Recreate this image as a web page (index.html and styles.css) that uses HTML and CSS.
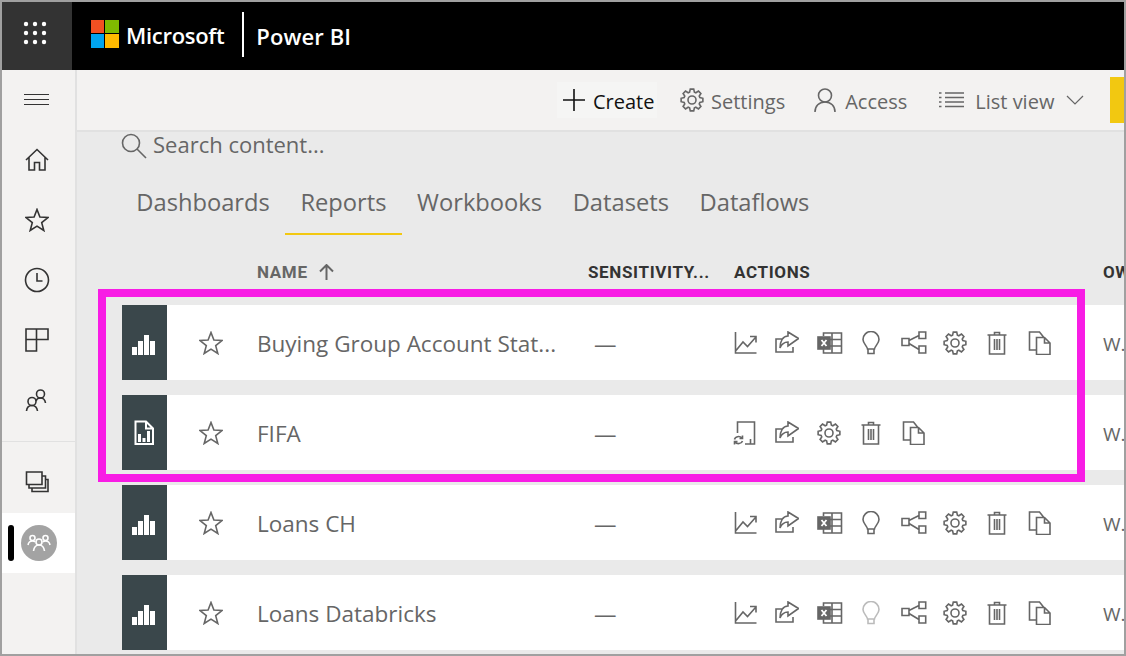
FILE: index.html
```html
<!DOCTYPE html>
<html>
<head>
	<meta charset="utf8">
	<title>Power BI</title>
	<link rel="stylesheet" href="styles.css">
</head>
<body>
	<!-- icones usados na tabela e na barra lateral -->
	<svg class="sprite" xmlns="http://www.w3.org/2000/svg">
		<symbol id="i-star" viewBox="0 0 24 24"><path d="M12 1.500l2.900 7.600 8.100.4-6.300 5.100 2.100 7.900L12 18.100l-6.800 4.400 2.100-7.900L1 9.500l8.100-.4z"/></symbol>
		<symbol id="i-trend" viewBox="0 0 24 24"><path d="M2.500 1v21h21M3 19.500L10 11l4.500 4.500 8-9M17 5.500h6v6"/></symbol>
		<symbol id="i-share" viewBox="0 0 24 24"><path d="M7 8H1v13h17v-5M13 1l10.500 6.500L13 15v-4c-3 0-6 1-8 6 0-7 3-12 8-12z"/></symbol>
		<symbol id="i-excel" viewBox="0 0 26 24"><path d="M6.500 5V2h18v20h-18v-4M13 8.500h11.500M13 15h11.500M15 2v20"/><rect class="solid" x="1" y="6" width="12" height="12"/><path class="cut" d="M4.500 9l5 6M9.500 9l-5 6"/></symbol>
		<symbol id="i-bulb" viewBox="0 0 24 24"><path d="M8.500 18c-.3-3-4.500-5.500-4.500-9.500a8 8 0 0 1 16 0c0 4-4.200 6.500-4.500 9.500zM9 18v4.500h6V18"/></symbol>
		<symbol id="i-nodes" viewBox="0 0 26 24"><path d="M1 7.500h7v7H1zM18 1h6.700v6.500H18zM18 15h6.700v7H18zM8 9.500l10-5M8 12.500l10 6"/></symbol>
		<symbol id="i-gear" viewBox="0 0 24 24"><path d="M9.600 4.160L10.280 1.130H13.720L14.400 4.160L15.850 4.760L18.470 3.100L20.900 5.530L19.240 8.150L19.840 9.600L22.870 10.280V13.720L19.840 14.400L19.240 15.850L20.900 18.470L18.470 20.900L15.850 19.240L14.400 19.840L13.720 22.870H10.280L9.600 19.840L8.150 19.240L5.530 20.900L3.100 18.470L4.760 15.850L4.160 14.400L1.130 13.720V10.280L4.160 9.600L4.760 8.150L3.100 5.530L5.530 3.100L8.150 4.760z"/><circle cx="12" cy="12" r="4"/></symbol>
		<symbol id="i-trash" viewBox="0 0 24 24"><path d="M2.500 4h19M9.500 4V1.500h5V4M4.500 4v19h15V4M9.500 8v11M12 8v11M14.500 8v11"/></symbol>
		<symbol id="i-copy" viewBox="0 0 24 24"><path d="M9.500 19H2.500V1h10l4 5M9.500 6.500h8l5.500 5.500v11.500H9.500zM17.500 6.500V12H23"/></symbol>
		<symbol id="i-refresh" viewBox="0 0 24 24"><path d="M4.500 12V1h17v22H12M17.500 23v-5M1.500 18.500c.5-3 5-4 7.500-1.500M9.500 20c-1 3-5.500 3.500-7.500 1M9.500 14.500v3H6.500M1.500 23.500v-3h3"/></symbol>
		<symbol id="i-bars" viewBox="0 0 25 25"><path class="fill" d="M0 17h5v8H0zM6 11h5v14H6zM12 5h5v20h-5zM18 11h5v14h-5z"/></symbol>
	</svg>

	<div class="topo">
		<div class="waffle">
			<svg width="26" height="26" viewBox="0 0 26 26"><g class="dots"><circle cx="4" cy="4" r="2.200"/><circle cx="13" cy="4" r="2.200"/><circle cx="22" cy="4" r="2.200"/><circle cx="4" cy="13" r="2.200"/><circle cx="13" cy="13" r="2.200"/><circle cx="22" cy="13" r="2.200"/><circle cx="4" cy="22" r="2.200"/><circle cx="13" cy="22" r="2.200"/><circle cx="22" cy="22" r="2.200"/></g></svg>
		</div>
		<svg class="ms-logo" width="28" height="28" viewBox="0 0 28 28">
			<rect width="13" height="13" fill="#f25022"/>
			<rect x="14" width="14" height="13" fill="#7fba00"/>
			<rect y="14" width="13" height="14" fill="#00a4ef"/>
			<rect x="14" y="14" width="14" height="14" fill="#ffb900"/>
		</svg>
		<span class="ms-nome">Microsoft</span>
		<span class="ms-divisor"></span>
		<span class="produto">Power BI</span>
	</div>

	<div class="corpo">
		<nav class="lateral">
			<div class="nav-item">
				<svg class="hamb" width="26" height="12" viewBox="0 0 26 12"><path d="M0 .5h25M0 5.500h25M0 10.500h25"/></svg>
			</div>
			<div class="nav-item">
				<svg width="24" height="24" viewBox="0 0 24 24"><path d="M1 12L12 1.500 23 12M4 9.500V22h5.500v-7.500h5V22H20V9.500"/></svg>
			</div>
			<div class="nav-item">
				<svg width="24" height="24"><use href="#i-star"/></svg>
			</div>
			<div class="nav-item">
				<svg width="26" height="26" viewBox="0 0 26 26"><circle cx="13" cy="13" r="11.500"/><path d="M13 6v8h5.500"/></svg>
			</div>
			<div class="nav-item">
				<svg width="24" height="24" viewBox="0 0 24 24"><path d="M1 1h10.500v10.500H1zM11.500 1H23v10.500H11.500zM1 11.500h10.500V23H1z"/></svg>
			</div>
			<div class="nav-item">
				<svg width="24" height="24" viewBox="0 0 24 24"><circle cx="15.500" cy="6" r="4"/><path d="M11 13c.5-2 2.500-3 4.500-3s4.500 1.500 5 5"/><circle cx="7" cy="13.500" r="4"/><path d="M1.500 23c.3-3.500 2.500-5.500 5.500-5.500s5 2 5.500 5.500"/></svg>
			</div>
			<div class="nav-sep"></div>
			<div class="nav-item nav-pilha">
				<svg width="26" height="24" viewBox="0 0 26 24"><path d="M2.500 2h15.500v12.500H2.500zM5 14.500v3.500h16.500v-12H18M8 18v3.500h16V9.500h-2.500"/></svg>
			</div>
			<div class="nav-ativo">
				<span class="pilula"></span>
				<span class="avatar">
					<svg width="24" height="24" viewBox="0 0 24 24"><circle cx="5.500" cy="7" r="2.500"/><circle cx="18.500" cy="7" r="2.500"/><circle cx="12" cy="11" r="3"/><path d="M1 14c.5-3 2-4 4.500-4 1 0 2 .3 2.500 1M23 14c-.5-3-2-4-4.500-4-1 0-2 .3-2.500 1M6.500 20c.5-3.500 2.500-6 5.500-6s5 2.500 5.500 6"/></svg>
				</span>
			</div>
		</nav>

		<main class="conteudo">
			<div class="ferramentas">
				<div class="tool criar">
					<svg width="24" height="24" viewBox="0 0 24 24"><path d="M12 1v22M1 12h22"/></svg>
					<span>Create</span>
				</div>
				<div class="tool t-settings">
					<svg width="24" height="24"><use href="#i-gear"/></svg>
					<span>Settings</span>
				</div>
				<div class="tool t-access">
					<svg width="22" height="24" viewBox="0 0 22 24"><circle cx="11" cy="7.500" r="6.500"/><path d="M1 24c0-6 4-10 10-10s10 4 10 10"/></svg>
					<span>Access</span>
				</div>
				<div class="tool t-lista">
					<svg width="25" height="18" viewBox="0 0 25 18"><path d="M6 2h19M6 6.500h19M6 11h19M6 15.500h19M0 2h2.500M0 6.500h2.500M0 11h2.500M0 15.500h2.500"/></svg>
					<span>List view</span>
					<svg class="seta" width="18" height="10" viewBox="0 0 18 10"><path d="M1 1l8 8 8-8"/></svg>
				</div>
				<span class="amarelo"></span>
			</div>

			<div class="busca">
				<svg width="26" height="26" viewBox="0 0 26 26"><circle cx="10" cy="10" r="8.500"/><path d="M16 16l9 9"/></svg>
				<span>Search content...</span>
			</div>

			<div class="abas">
				<span class="aba">Dashboards</span>
				<span class="aba ativa">Reports</span>
				<span class="aba">Workbooks</span>
				<span class="aba">Datasets</span>
				<span class="aba">Dataflows</span>
			</div>

			<div class="cabecalho">
				<span class="col-nome">NAME <svg width="15" height="16" viewBox="0 0 15 16"><path d="M7.500 16V1M1 7.500L7.500 1 14 7.500"/></svg></span>
				<span>SENSITIVITY...</span>
				<span>ACTIONS</span>
				<span>OW</span>
			</div>

			<div class="linha">
				<span class="tile"><svg width="25" height="25"><use href="#i-bars"/></svg></span>
				<span class="estrela"><svg width="24" height="24"><use href="#i-star"/></svg></span>
				<span class="nome">Buying Group Account Stat...</span>
				<span class="sens">—</span>
				<span class="acoes">
					<svg width="24" height="24"><use href="#i-trend"/></svg>
					<svg width="24" height="24"><use href="#i-share"/></svg>
					<svg width="26" height="24"><use href="#i-excel"/></svg>
					<svg width="24" height="24"><use href="#i-bulb"/></svg>
					<svg width="26" height="24"><use href="#i-nodes"/></svg>
					<svg width="24" height="24"><use href="#i-gear"/></svg>
					<svg width="24" height="24"><use href="#i-trash"/></svg>
					<svg width="24" height="24"><use href="#i-copy"/></svg>
				</span>
				<span class="dono">W.</span>
			</div>

			<div class="linha">
				<span class="tile">
					<svg width="25" height="25" viewBox="0 0 25 25"><path class="traco-branco" d="M3.500 1.500H14l7 7V24H3.500zM14 1.500v7h7"/><path class="fill" d="M6 14h3v8H6zM10.500 18h3v4h-3zM15 11h3v11h-3z"/></svg>
				</span>
				<span class="estrela"><svg width="24" height="24"><use href="#i-star"/></svg></span>
				<span class="nome">FIFA</span>
				<span class="sens">—</span>
				<span class="acoes">
					<svg width="24" height="24"><use href="#i-refresh"/></svg>
					<svg width="24" height="24"><use href="#i-share"/></svg>
					<svg width="24" height="24"><use href="#i-gear"/></svg>
					<svg width="24" height="24"><use href="#i-trash"/></svg>
					<svg width="24" height="24"><use href="#i-copy"/></svg>
				</span>
				<span class="dono">W.</span>
			</div>

			<div class="linha">
				<span class="tile"><svg width="25" height="25"><use href="#i-bars"/></svg></span>
				<span class="estrela"><svg width="24" height="24"><use href="#i-star"/></svg></span>
				<span class="nome">Loans CH</span>
				<span class="sens">—</span>
				<span class="acoes">
					<svg width="24" height="24"><use href="#i-trend"/></svg>
					<svg width="24" height="24"><use href="#i-share"/></svg>
					<svg width="26" height="24"><use href="#i-excel"/></svg>
					<svg width="24" height="24"><use href="#i-bulb"/></svg>
					<svg width="26" height="24"><use href="#i-nodes"/></svg>
					<svg width="24" height="24"><use href="#i-gear"/></svg>
					<svg width="24" height="24"><use href="#i-trash"/></svg>
					<svg width="24" height="24"><use href="#i-copy"/></svg>
				</span>
				<span class="dono">W.</span>
			</div>

			<div class="linha">
				<span class="tile"><svg width="25" height="25"><use href="#i-bars"/></svg></span>
				<span class="estrela"><svg width="24" height="24"><use href="#i-star"/></svg></span>
				<span class="nome">Loans Databricks</span>
				<span class="sens">—</span>
				<span class="acoes">
					<svg width="24" height="24"><use href="#i-trend"/></svg>
					<svg width="24" height="24"><use href="#i-share"/></svg>
					<svg width="26" height="24"><use href="#i-excel"/></svg>
					<svg class="apagado" width="24" height="24"><use href="#i-bulb"/></svg>
					<svg width="26" height="24"><use href="#i-nodes"/></svg>
					<svg width="24" height="24"><use href="#i-gear"/></svg>
					<svg width="24" height="24"><use href="#i-trash"/></svg>
					<svg width="24" height="24"><use href="#i-copy"/></svg>
				</span>
				<span class="dono">W.</span>
			</div>
		</main>
	</div>

	<!-- marcacao rosa por cima das duas primeiras linhas -->
	<div class="destaque"></div>
</body>
</html>
```

FILE: styles.css
```css
html, body{
	margin: 0;
	padding: 0;
}
body{
	position: relative;
	width: 1126px;
	height: 656px;
	box-sizing: border-box;
	border: 2px solid #a0a0a0;
	overflow: hidden;
	font-family: "Open Sans", sans-serif;
	color: #666;
	background-color: #eaeaea;
}
svg{
	display: block;
	flex: none;
	fill: none;
	stroke: #666;
	stroke-width: 1.6;
}
.sprite{
	display: none;
}
.solid{
	fill: #666;
}
.cut{
	stroke: #fff;
	stroke-width: 1.8;
}
.fill{
	fill: #fff;
	stroke: none;
}

/* barra preta */
.topo{
	display: flex;
	align-items: center;
	height: 68px;
	background-color: #000;
	color: #fff;
}
.waffle{
	display: flex;
	align-items: center;
	justify-content: center;
	width: 70px;
	height: 68px;
	box-sizing: border-box;
	padding-right: 4px;
	padding-bottom: 6px;
	background-color: #333;
}
.dots{
	fill: #fff;
	stroke: none;
}
.ms-logo{
	margin-left: 19px;
	margin-bottom: 4px;
	stroke: none;
}
.ms-nome{
	margin-left: 7px;
	margin-bottom: 3px;
	font-size: 22px;
	font-weight: 600;
	letter-spacing: -.3px;
}
.ms-divisor{
	width: 2px;
	height: 45px;
	margin-left: 18px;
	margin-bottom: 3px;
	background-color: #fff;
}
.produto{
	margin-left: 12px;
	font-size: 22px;
	font-weight: 600;
	letter-spacing: .1px;
}

.corpo{
	display: flex;
	height: 584px;
}

/* menu lateral */
.lateral{
	flex: none;
	width: 73px;
	border-right: 2px solid #e1e1e1;
	background-color: #f3f2f1;
}
.lateral svg{
	stroke: #333;
}
.lateral .hamb{
	stroke-width: 1;
}
.nav-item{
	display: flex;
	align-items: center;
	justify-content: center;
	height: 60px;
	padding-right: 3px;
}
.nav-sep{
	height: 1px;
	margin-top: 11px;
	background-color: #e1e1e1;
}
.nav-pilha{
	margin-top: 10px;
}
.nav-ativo{
	display: flex;
	align-items: center;
	height: 60px;
	margin-top: 1px;
	background-color: #fff;
}
.pilula{
	width: 6px;
	height: 36px;
	margin-left: 6px;
	border-radius: 3px;
	background-color: #000;
}
.avatar{
	display: flex;
	align-items: center;
	justify-content: center;
	width: 36px;
	height: 36px;
	margin-left: 7px;
	border-radius: 50%;
	background-color: #a3a3a3;
}
.lateral .avatar svg{
	stroke: #fff;
}

/* conteudo */
.conteudo{
	flex: 1;
	min-width: 0;
	overflow: hidden;
}
.ferramentas{
	display: flex;
	align-items: center;
	height: 60px;
	padding-left: 480px;
	border-bottom: 2px solid #e1e1e1;
	background-color: #f3f2f1;
	font-size: 20px;
}
.tool{
	display: flex;
	align-items: center;
	flex: none;
	height: 36px;
}
.tool span{
	padding-top: 2px;
}
.criar{
	width: 100px;
	box-sizing: border-box;
	padding-left: 5px;
	gap: 7px;
	background-color: #f5f5f4;
	color: #111;
}
.criar svg{
	stroke: #111;
}
.t-settings{
	margin-left: 23px;
	gap: 7px;
}
.t-access{
	margin-left: 29px;
	gap: 9px;
}
.t-lista{
	margin-left: 32px;
	gap: 11px;
}
.seta{
	margin-left: 1px;
	stroke-width: 1.2;
}
.amarelo{
	flex: none;
	width: 14px;
	height: 46px;
	margin-left: 26px;
	background-color: #f2c811;
}

.busca{
	display: flex;
	align-items: center;
	gap: 6px;
	height: 28px;
	padding-left: 44px;
	font-size: 22px;
}
.busca span{
	margin-bottom: 4px;
}
.abas{
	display: flex;
	margin-top: 20px;
	padding-left: 44px;
	font-size: 23.700px;
}
.aba{
	padding: 0 15.300px;
	height: 55px;
	line-height: 44px;
	box-sizing: border-box;
}
.ativa{
	border-bottom: 2px solid #f2c811;
}

/* tabela */
.cabecalho, .linha{
	display: grid;
	grid-template-columns: 45px 90px 331px 146px 369px 60px;
	align-items: center;
	margin-left: 45px;
}
.cabecalho{
	height: 28px;
	margin-top: 23px;
	margin-bottom: 19px;
	font-family: "Roboto", sans-serif;
	font-size: 17px;
	font-weight: 700;
	letter-spacing: .65px;
	color: #333;
}
.col-nome{
	display: flex;
	align-items: center;
	gap: 11px;
	grid-column: 3;
	color: #666;
}
.col-nome svg{
	stroke-width: 2;
}
.linha{
	height: 75px;
	margin-bottom: 15px;
	background-color: #fff;
	font-size: 22.500px;
}
.nome, .sens, .dono{
	padding-top: 2px;
}
.dono{
	font-size: 19px;
}
.tile{
	display: flex;
	align-items: center;
	justify-content: center;
	height: 75px;
	background-color: #3a474b;
}
.tile svg{
	stroke: none;
}
.traco-branco{
	stroke: #fff;
	stroke-width: 2;
}
.estrela{
	padding-left: 32px;
}
.sens{
	padding-left: 6px;
}
.acoes{
	display: flex;
	align-items: center;
	padding-top: 1px;
	margin-left: -1px;
}
.acoes svg{
	margin-right: 18px;
}
.acoes svg[width="26"]{
	margin-right: 16px;
}
.acoes .apagado{
	stroke: #bbb;
}

.destaque{
	position: absolute;
	left: 96px;
	top: 287px;
	width: 987px;
	height: 193px;
	box-sizing: border-box;
	border: 8px solid #f81ce5;
}
```
